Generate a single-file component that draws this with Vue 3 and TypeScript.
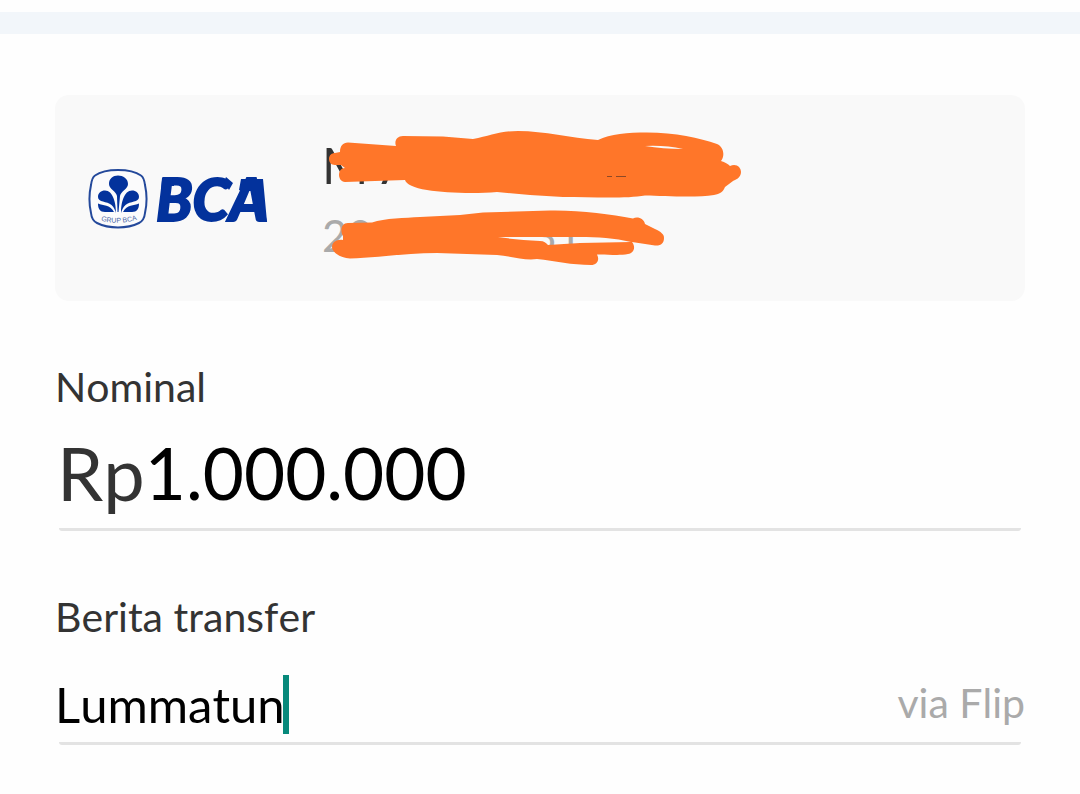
<script setup lang="ts">
import { ref } from 'vue'

const amount = ref('1.000.000')
const note = ref('Lummatun')
</script>

<template>
  <main class="page">
    <div class="divider"></div>
    <form class="content" @submit.prevent>
      <section class="account">
        <svg class="logo" viewBox="0 0 184 60" role="img" aria-label="BCA">
          <path class="badge" d="M30 1C40 1 48 3 53 6.500C56 8.500 56.500 12 57 16C59 25 59 35 57 44C56.500 49 55 52 51 54C45 57 38 58.500 30 58.500S15 57 9 54C5 52 3.500 49 3 44C1 35 1 25 3 16C3.500 12 4 8.500 7 6.500C12 3 20 1 30 1Z" />
          <g fill="#03329c">
            <path d="M29 27C28 22 21 20 21 15C21 9.500 25 6.500 30 6.500S40 9.500 40 15C40 20 33 22 32 27L30.500 43L29.500 43Z" />
            <path d="M28 44C28 34 25 21.500 17 21.500C13 21.500 10 24 10 28C10 33.500 19 32 23.500 36C26 38 27 41 28 44Z" />
            <path d="M33 44C33 34 36 21.500 44 21.500C48 21.500 51 24 51 28C51 33.500 42 32 37.500 36C35 38 34 41 33 44Z" />
            <path d="M10 34.500C15 37 22 35 26 43H17C12 43 10 40 10 34.500Z" />
            <path d="M51 34.500C46 37 39 35 35 43H44C49 43 51 40 51 34.500Z" />
          </g>
          <path id="badge-arc" d="M10 51Q30 57 52 50" fill="none" />
          <text class="group"><textPath href="#badge-arc" startOffset="50%" text-anchor="middle">GRUP BCA</textPath></text>
          <text class="wordmark" x="68" y="52">BCA</text>
          <path class="spur" d="M74 9H86V17H77Q76 20 73 21ZM136 13L138 8L145 14L141 21ZM153 10H175L179 53H173L167 22H158Q156 24 151 21Z" />
        </svg>
        <div class="holder">
          <span class="name">M A</span>
          <span class="number"><span>20</span><span>31</span></span>
          <svg class="marker" viewBox="322 120 440 160" aria-hidden="true">
            <path d="M340 152C340 146 343 142.500 348 142.500L396 146C394 141 397 136 403 136L443 136.500L473 139C490 136 500 131 518 131C545 131 570 138 598 140C610 134 628 132.500 647 132.500C675 132.500 700 138 717 144C724 147 725 156 721 161C725 162 728 164 730 166C736 163 741 167 741 172C741 178 735 180 733 181L725 187C723 192 720 194 714 195C697 198 665 196 645 195.500C625 199 590 197 563 197L530 195L497 192C475 194 445 193 427 190C414 188 406 184 405 180L345 182C341 182 339 178 339 175C339 171 341 168 345 168L341 165H335C331 165 329 162 329 159C329 155 332 153 335 153ZM645 146Q663 149 683 149Q665 145 645 146Z" />
            <path d="M343 236C340 231 341 223 348 223L372 222.500C385 218 405 218 420 217L460 215L483 212.500L550 210.500C580 210 610 214 633 218.500C638 216 644 219 645 224L655 229C661 232 664 234 664 238C664 243 661 246 655 245.500L632 242C636 247 634 253 628 254C618 256 606 254 597 254.500C600 260 597 265 591 265C572 265 555 261 537 259C525 261 510 256 497 255L437 253C405 253 375 258 350 258.500C340 258 332 252 332 247C332 242 337 239 343 240ZM498 237C510 239 525 240 540 241C544 241 546 243 548 245L580 243L631 242C615 238 597 237 580 237Z" />
            <path class="trace" d="M607 176.500H612M616 176.500H626" />
          </svg>
        </div>
      </section>

      <label class="label" for="amount">Nominal</label>
      <div class="field amount">
        <span class="prefix">Rp</span>
        <input id="amount" v-model="amount" type="text" inputmode="numeric" />
      </div>

      <label class="label" for="note">Berita transfer</label>
      <div class="field note">
        <input id="note" v-model="note" type="text" />
        <span class="caret"></span>
        <span class="via">via Flip</span>
      </div>
    </form>
  </main>
</template>

<style>
body {
  margin: 0;
  background: #fefefe;
}
</style>

<style scoped>
.page {
  padding: 12px 0 49px;
  font-family: Lato, 'Liberation Sans', sans-serif;
  font-kerning: none;
  color: #333;
}
.divider {
  height: 22px;
  background: #f2f6fa;
}
.content {
  padding: 61px 55px 0;
}
.account {
  display: flex;
  align-items: center;
  gap: 50px;
  padding: 40px 33px 39px;
  border-radius: 14px;
  background: #f9f9f9;
  margin-bottom: 60px;
}
.logo {
  width: 184px;
  height: 60px;
  flex: none;
  overflow: visible;
}
.badge {
  fill: #fbfbfc;
  stroke: #24499b;
  stroke-width: 2;
}
.group {
  font: 7px 'Liberation Sans', sans-serif;
  fill: #4c69a8;
}
.wordmark {
  font: italic 900 59px Lato, sans-serif;
  fill: #03329c;
  stroke: #03329c;
  stroke-width: 2;
}
.spur {
  fill: #03329c;
}
.holder {
  position: relative;
  display: flex;
  flex-direction: column;
  gap: 14px;
}
.name {
  font-size: 50px;
  line-height: 60px;
}
.number {
  display: flex;
  gap: 158px;
  font-size: 44px;
  line-height: 53px;
  color: #aaa;
}
.marker {
  position: absolute;
  left: 0;
  top: -15px;
  width: 440px;
  height: 160px;
  fill: #ff7629;
  fill-rule: evenodd;
}
.trace {
  stroke: #8d4927;
  stroke-width: 1;
}
.label {
  display: block;
  font-size: 41px;
  line-height: 52px;
}
.field {
  position: relative;
  display: flex;
  align-items: center;
}
.field::after {
  content: '';
  position: absolute;
  left: 4px;
  right: 4px;
  bottom: 0;
  height: 3px;
  border-radius: 0 0 3px 3px;
  background: #e3e3e3;
}
.field input {
  min-width: 0;
  margin: 0;
  padding: 0;
  border: 0;
  outline: 0;
  background: transparent;
  font: inherit;
  font-kerning: none;
  color: #000;
}
.amount {
  margin: 17px 0 60px;
  padding: 0 0 15px 2px;
  font-size: 71px;
  line-height: 86px;
}
.prefix {
  font-size: 74px;
}
.amount input {
  flex: 1;
  height: 86px;
}
.note {
  margin-top: 32px;
  padding-bottom: 11px;
  font-size: 49px;
  line-height: 59px;
}
.note input {
  field-sizing: content;
  height: 59px;
}
.caret {
  width: 6px;
  height: 59px;
  margin-left: -2px;
  background: #07897b;
}
.via {
  align-self: flex-start;
  margin-left: auto;
  font-size: 41px;
  line-height: 56px;
  color: #aaa;
}
</style>
